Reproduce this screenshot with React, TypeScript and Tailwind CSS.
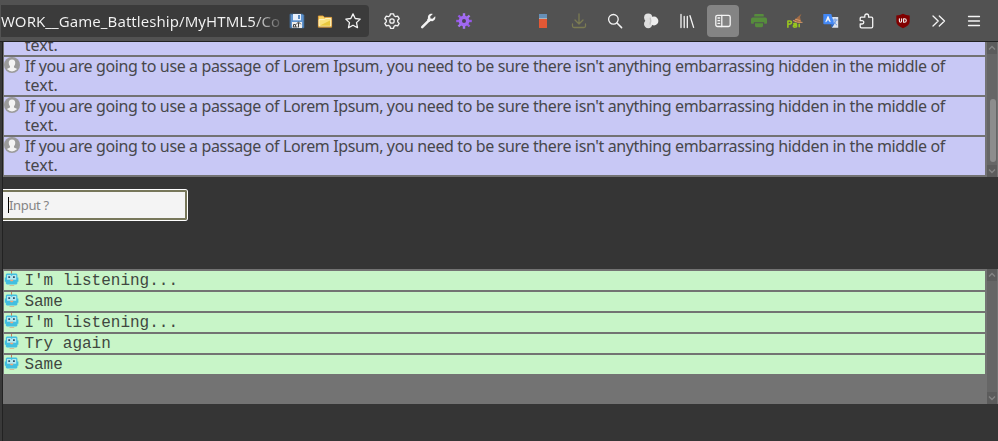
import React from "react";

const passage =
  "If you are going to use a passage of Lorem Ipsum, you need to be sure there isn't anything embarrassing hidden in the middle of";
const replies = ["I'm listening...", "Same", "I'm listening...", "Try again", "Same"];

function Svg({ children, className = "" }: { children: React.ReactNode; className?: string }) {
  return (
    <svg viewBox="0 0 16 16" className={`h-4 w-4 shrink-0 ${className}`} fill="none" stroke="#f4f4f4" strokeWidth="1.3" strokeLinecap="round" strokeLinejoin="round">
      {children}
    </svg>
  );
}

function Floppy() {
  return (
    <Svg>
      <path d="M1.5 1.2h12.2l1.1 1.1v12.5H1.5z" fill="#5f93cf" stroke="#477aaf" strokeWidth=".8" />
      <path d="M4 1h8v6.3H4z" fill="#e9f0fb" stroke="none" />
      <path d="M9 2h2v4H9z" fill="#5b8ac0" stroke="none" />
      <path d="M3 9h10v6H3z" fill="#eee" stroke="none" />
      <path d="M4.5 13.5v-2h2v2M7.5 11l2-2 2 2M9.5 10v4M4 14h4" stroke="#444" strokeWidth="1" />
    </Svg>
  );
}

function Folder() {
  return (
    <Svg>
      <path d="M1.4 13.8V3h4.8l1.2 1.4h7.2v9.4z" fill="#f7d466" stroke="#e9a13a" strokeWidth=".9" />
      <path d="M2.5 6.6h5L9 5.4h4.8v7.4H2.5z" fill="#fae27b" stroke="#fff6cf" strokeWidth=".9" />
      <path d="M3 12.5L13 7.5v5.2H3z" fill="#e9c93e" stroke="none" />
    </Svg>
  );
}

function PurpleGear() {
  return (
    <Svg>
      {[0, 45, 90, 135].map((a) => (
        <path key={a} d="M8 .2v15.6" stroke={a < 90 ? "#a675f5" : "#9658e8"} strokeWidth="2.4" strokeLinecap="butt" transform={`rotate(${a} 8 8)`} />
      ))}
      <circle cx="8" cy="8" r="5.4" fill="#a068f1" stroke="none" />
      <circle cx="8" cy="8" r="2" fill="#4b4058" stroke="none" />
    </Svg>
  );
}

function Toolbar() {
  return (
    <header className="flex h-[42px] shrink-0 items-center border-b border-[#222] bg-[#525252] pl-[1px]">
      <div className="flex h-8 w-[368px] shrink-0 items-center rounded-r-[4px] bg-[#3b3b3b]">
        <div className="w-[281px] shrink-0 whitespace-nowrap bg-gradient-to-r from-[#f4f4f4] from-[90%] to-[#555] bg-clip-text font-['Noto_Sans',sans-serif] text-[15px] leading-8 tracking-[0.06px] text-transparent">
          WORK__Game_Battleship/MyHTML5/Co
        </div>
        <div className="ml-[7px] flex gap-3">
          <Floppy />
          <Folder />
          <Svg>
            <path d="M8 .9l2.2 4.6 5 .6-3.7 3.5 1 5.1L8 12.2l-4.5 2.5 1-5.1L.8 6.1l5-.6z" />
          </Svg>
        </div>
      </div>
      <div className="ml-[15px] flex w-[88px] gap-5">
        <Svg>
          <path d="M6.5.8h3l.6 2 1.5.9 2.1-.5 1.5 2.5-1.5 1.5v1.7l1.5 1.5-1.5 2.5-2.1-.5-1.5.9-.6 2h-3l-.6-2-1.5-.9-2.1.5-1.5-2.5 1.5-1.5V7.2L.8 5.7l1.5-2.5 2.1.5 1.5-.9z" />
          <circle cx="8" cy="8" r="2.2" />
        </Svg>
        <Svg>
          <path d="M2.2 14.1L9 7.3" strokeWidth="2.5" />
          <path d="M12.8.9L10.2 3.5l.3 2 2 .3 2.7-2.6c.8 3-1.5 5.5-4.4 4.9L8.9 9 7 7.1l1-1.9C7.4 2.4 9.9 0 12.8.9z" fill="#f4f4f4" stroke="none" />
        </Svg>
        <PurpleGear />
      </div>
      <div className="ml-[63px] flex items-center gap-5">
        <Svg>
          <path d="M4 1h8v4H4z" fill="#668fb7" stroke="none" />
          <path d="M4 5h8v1H4z" fill="#a9b3b8" stroke="none" />
          <path d="M4 6h8v8.4q0 .6-.6.6H4.6q-.6 0-.6-.6z" fill="#e35835" stroke="none" />
        </Svg>
        <Svg>
          <path d="M8 1v10M4 7l4 4 4-4M1.5 11v2q0 1.5 1.5 1.5h10q1.5 0 1.5-1.5v-2" stroke="#7b7b52" />
        </Svg>
        <Svg>
          <circle cx="6.4" cy="6.3" r="4.8" />
          <path d="M10 10l4.6 4.6" strokeWidth="1.5" />
        </Svg>
        <Svg>
          <circle cx="5.2" cy="4.6" r="4.1" fill="#e1e1e1" stroke="none" />
          <circle cx="5.2" cy="11" r="4.2" fill="#ddd" stroke="none" />
          <circle cx="11" cy="8" r="4.4" fill="#eee" stroke="none" />
          <path d="M2.5 5h4v6h-4z" fill="#dedede" stroke="none" />
          <path d="M7.3 5.3q1 2.7-.2 5.7" stroke="#c4c4c4" strokeWidth="1.5" />
        </Svg>
        <Svg>
          <path d="M2 1.5v13M5.2 3.5v11M8.3 3.5v11M11 2.7l3.6 11.7" strokeWidth="1.3" />
        </Svg>
        <div className="-mx-2 flex h-8 w-8 items-center justify-center rounded-[4px] bg-[#848484]">
          <Svg>
            <rect x=".8" y="2.3" width="14.4" height="11.2" rx="1.7" />
            <path d="M6.8 2.5v11M3 5h1.6M3 7.7h1.6M3 10.4h1.6" />
          </Svg>
        </div>
        <Svg>
          <path d="M4.2 1h7.6q1 0 1 1v1.5H3.2V2q0-1 1-1zM1.7 4.5h12.6Q16 4.5 16 6.2V10q0 .8-.8.8h-2V9.2H2.8v1.6h-2Q0 10.8 0 10V6.2Q0 4.5 1.7 4.5z" fill="#568d3c" stroke="none" />
          <path d="M4 10.2h8v2.6q0 1.4-1.4 1.4H5.4Q4 14.2 4 12.8z" fill="#568d3c" stroke="none" />
        </Svg>
        <Svg>
          <path d="M.9 14.2V8h1.8q1.8 0 1.8 1.6t-2.8 1.6M6.8 10.7q2.7-1 2.7 1v2q-3.3 1-3.1-.6 0-1.2 3-.9M12.2 13.8v-2.6" stroke="#98c51f" strokeWidth="1.6" />
          <path d="M6.5 7.8L14.5.8 13 4l1.2 5.2q-3.5 1.1-7.7-1.4z" fill="#a36c46" stroke="none" />
          <path d="M6.3 7.7q4 2.5 8.8 1.7M8.5 6.3l4.5 1.2" stroke="#d99c69" strokeWidth="1" />
        </Svg>
        <Svg>
          <path d="M7.5 4h7.7v10.7H9z" fill="#dce2ec" stroke="none" />
          <path d="M9.5 7h4.8M12 5.8V7M13.2 7.2q-.7 3.4-3.1 4.4M10.7 8q.8 2.5 3 4" stroke="#709ae0" strokeWidth="1" />
          <path d="M.3 1h8l3 10.2H1.2Q.3 11.2.3 10.3z" fill="#4388f5" stroke="none" />
          <path d="M7.2 11.2h4L9 14.7z" fill="#285fb5" stroke="none" />
          <path d="M3 8.6l2-5 2 5M3.7 6.8h2.6" strokeWidth="1.2" />
        </Svg>
        <Svg>
          <path d="M1.2 5.2q0-1 1-1h3.6V2.9a1.9 1.9 0 0 1 3.8 0v1.3h2.9q1.2 0 1.2 1.2v8.1q0 1.3-1.3 1.3H2.5q-1.3 0-1.3-1.2V11h1.9a1.7 1.7 0 0 0 0-3.4H1.2z" strokeWidth="1.3" />
        </Svg>
        <Svg>
          <path d="M8 .7q3 1.7 6.7 1.7v6.2q0 4-6.7 6.6Q1.3 12.6 1.3 8.6V2.4Q5 2.4 8 .7z" fill="#800000" stroke="none" />
          <path d="M4.4 5.7v2.4q0 1.2 1.1 1.2t1.1-1.2V5.7" strokeWidth="1.1" />
          <path d="M8.6 5.7h.8q1.9 0 1.9 1.8t-1.9 1.8h-.8z" strokeWidth="1.1" />
        </Svg>
        <Svg>
          <path d="M2 3l5.2 5-5.2 5M8.3 3l5.2 5-5.2 5" strokeWidth="1.3" />
        </Svg>
        <Svg className="-ml-px">
          <path d="M2.5 3.5h11M2.5 8h11M2.5 12.5h11" strokeWidth="1.3" />
        </Svg>
      </div>
    </header>
  );
}

function Person() {
  return (
    <svg viewBox="0 0 16 16" className="h-4 w-4 shrink-0">
      <circle cx="8" cy="8" r="8" fill="#9b9b9b" />
      <path d="M8 2.6c4.2 0 3.7 4.6 2 6.6v1.2l3.2 1.7Q8 17 2.8 12.1L6 10.4V9.2C4.3 7.2 3.8 2.6 8 2.6z" fill="#f3f3f3" />
    </svg>
  );
}

function Robot() {
  return (
    <svg viewBox="0 0 16 16" className="h-4 w-4 shrink-0">
      <path d="M7 0h1v3H7z" fill="#c7805b" />
      <path d="M2.8 2.5h9.6l1 1v3h1v4.2h-1v1.8l-1 1H2.8l-1-1v-1.8h-1V6.5h1v-3z" fill="#42bfe0" />
      <path d="M3 4h3.6l1 1 1-1h3.6v4.8H3z" fill="#b4e9f1" />
      <path d="M4.3 5.3h1.8v1.8H4.3zM9 5.3h1.8v1.8H9z" fill="#31526c" />
      <path d="M5.8 8.8h3.8l-1 1.4H6.8z" fill="#f2a478" />
      <path d="M5.5 14h4.7v.8H5.5z" fill="#d7ad87" />
    </svg>
  );
}

function Arrow({ down = false }: { down?: boolean }) {
  return (
    <div className="flex h-3 items-center justify-center bg-[#5c5c5c]">
      <svg viewBox="0 0 8 6" className={`h-1.5 w-2 ${down ? "rotate-180" : ""}`} fill="none" stroke="#858585" strokeWidth="1.4">
        <path d="M1 4.5l3-3 3 3" />
      </svg>
    </div>
  );
}

function Scrollbar({ thumb = false }: { thumb?: boolean }) {
  return (
    <div className="flex w-[11px] shrink-0 flex-col border-r border-[#737373] bg-[#666]">
      <Arrow />
      <div className="flex flex-1 flex-col justify-end pb-[3px] pl-[3px] pr-px">
        {thumb && <div className="h-[63px] rounded-[3px] bg-[#8d8d8d]" />}
      </div>
      <Arrow down />
    </div>
  );
}

function UserRow() {
  return (
    <div className="flex h-[38px] shrink-0 bg-[#c8c8f5] text-[#47474b]">
      <Person />
      <div className="ml-[4.7px] whitespace-nowrap font-['Noto_Sans',sans-serif] text-[16px] leading-[19px]">
        <p className="tracking-[-0.37px]">{passage}</p>
        <p>text.</p>
      </div>
    </div>
  );
}

export default function App() {
  return (
    <div className="flex h-[441px] w-[998px] flex-col overflow-hidden bg-[#353535]">
      <Toolbar />
      <div className="flex flex-1">
        <div className="w-[3px] shrink-0 border-r border-[#222] bg-[#393939]" />
        <main className="flex w-[995px] flex-col">
          <section className="flex h-[135px] bg-[#737373]">
            <div className="ml-px mr-0.5 flex w-[981px] flex-col justify-end gap-0.5 overflow-hidden pb-0.5">
              {[0, 1, 2, 3].map((i) => (
                <UserRow key={i} />
              ))}
            </div>
            <Scrollbar thumb />
          </section>
          <div className="h-[92px] pt-3">
            <div className="h-8 w-[185px] rounded-r-[3px] border-y border-r border-white bg-white">
              <div className="flex h-[30px] items-center rounded-r-[2px] border-y-2 border-r-2 border-[#77775a] bg-[#f4f4f4] pl-[5px]">
                <span className="h-4 w-px bg-black" />
                <span className="font-['Noto_Sans',sans-serif] text-[13px] leading-4 tracking-[-0.35px] text-[#858585]">Input ?</span>
              </div>
            </div>
          </div>
          <section className="flex h-[135px] bg-[#737373]">
            <div className="ml-px mr-0.5 flex w-[981px] flex-col gap-0.5 pt-0.5">
              {replies.map((reply, i) => (
                <div key={i} className="flex h-[19px] bg-[#c8f5c8] text-[#404740]">
                  <Robot />
                  <span className="ml-[4.4px] pt-px font-['Liberation_Mono',monospace] text-[16px] leading-[19px]">{reply}</span>
                </div>
              ))}
            </div>
            <Scrollbar />
          </section>
        </main>
      </div>
    </div>
  );
}
